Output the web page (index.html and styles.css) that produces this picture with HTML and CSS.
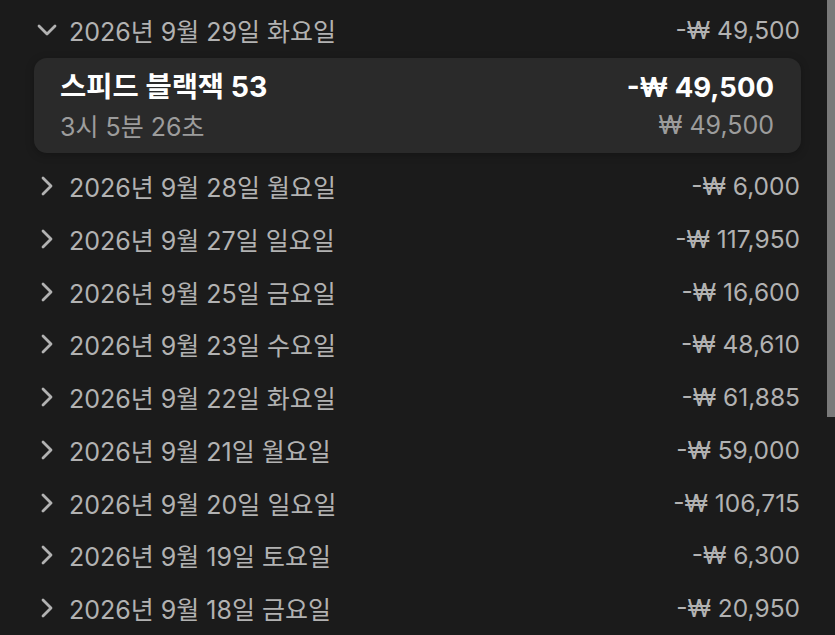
FILE: index.html
```html
<!DOCTYPE html>
<html lang="ko">
<head>
    <meta charset="UTF-8">
    <meta name="viewport" content="width=device-width, initial-scale=1.0">
    <title>결제 내역</title>
    <link rel="stylesheet" href="styles.css">
</head>
<body>
    <div class="list">
        <div class="day open">
            <svg class="chev" viewBox="0 0 20 20"><polyline points="2,6 10,14 18,6"/></svg>
            <span class="date">2026년 9월 29일 화요일</span>
            <span class="sum">-₩ 49,500</span>
        </div>
        <div class="card">
            <div class="card-row">
                <span class="title">스피드 블랙잭 53</span>
                <span class="amount">-₩ 49,500</span>
            </div>
            <div class="card-row sub">
                <span>3시 5분 26초</span>
                <span>₩ 49,500</span>
            </div>
        </div>
        <div class="day">
            <svg class="chev" viewBox="0 0 20 20"><polyline points="6,2 14,10 6,18"/></svg>
            <span class="date">2026년 9월 28일 월요일</span>
            <span class="sum">-₩ 6,000</span>
        </div>
        <div class="day">
            <svg class="chev" viewBox="0 0 20 20"><polyline points="6,2 14,10 6,18"/></svg>
            <span class="date">2026년 9월 27일 일요일</span>
            <span class="sum">-₩ 117,950</span>
        </div>
        <div class="day">
            <svg class="chev" viewBox="0 0 20 20"><polyline points="6,2 14,10 6,18"/></svg>
            <span class="date">2026년 9월 25일 금요일</span>
            <span class="sum">-₩ 16,600</span>
        </div>
        <div class="day">
            <svg class="chev" viewBox="0 0 20 20"><polyline points="6,2 14,10 6,18"/></svg>
            <span class="date">2026년 9월 23일 수요일</span>
            <span class="sum">-₩ 48,610</span>
        </div>
        <div class="day">
            <svg class="chev" viewBox="0 0 20 20"><polyline points="6,2 14,10 6,18"/></svg>
            <span class="date">2026년 9월 22일 화요일</span>
            <span class="sum">-₩ 61,885</span>
        </div>
        <div class="day">
            <svg class="chev" viewBox="0 0 20 20"><polyline points="6,2 14,10 6,18"/></svg>
            <span class="date">2026년 9월 21일 월요일</span>
            <span class="sum">-₩ 59,000</span>
        </div>
        <div class="day">
            <svg class="chev" viewBox="0 0 20 20"><polyline points="6,2 14,10 6,18"/></svg>
            <span class="date">2026년 9월 20일 일요일</span>
            <span class="sum">-₩ 106,715</span>
        </div>
        <div class="day">
            <svg class="chev" viewBox="0 0 20 20"><polyline points="6,2 14,10 6,18"/></svg>
            <span class="date">2026년 9월 19일 토요일</span>
            <span class="sum">-₩ 6,300</span>
        </div>
        <div class="day">
            <svg class="chev" viewBox="0 0 20 20"><polyline points="6,2 14,10 6,18"/></svg>
            <span class="date">2026년 9월 18일 금요일</span>
            <span class="sum">-₩ 20,950</span>
        </div>
    </div>
    <div class="scrollbar"><div class="thumb"></div></div>
</body>
</html>
```

FILE: styles.css
```css
body {
    margin: 0;
    background: #1b1b1b;
    font-family: 'Inter', 'Noto Sans CJK KR', sans-serif;
    height: 635px;
    overflow: hidden;
}
.list {
    padding: 4px 34px 0 34px;
    width: 767px;
}
.day {
    display: flex;
    align-items: center;
    height: 52.75px;
    color: #b2b2b2;
    font-size: 25px;
}
.chev {
    width: 20px;
    height: 20px;
    margin: 0 12px 0 3px;
    fill: none;
    stroke: #b2b2b2;
    stroke-width: 2.8;
    stroke-linecap: round;
    stroke-linejoin: round;
}
.date { flex: 1; }
.sum {
    margin-right: 1px;
    font-size: 24.5px;
}
.card {
    background: #2a2a2a;
    border-radius: 13px;
    padding: 11px 27px 10px 26px;
    margin: 1px 0 7px 0;
    box-shadow: 0 2px 8px rgba(0, 0, 0, 0.25);
}
.card-row {
    display: flex;
    justify-content: space-between;
    align-items: center;
}
.title, .amount {
    color: #fff;
    font-weight: bold;
    font-size: 27.5px;
    height: 36px;
    line-height: 36px;
}
.title { font-size: 28.5px; }
.sub {
    color: #9c9c9c;
    font-size: 25px;
    height: 36px;
    margin-top: 2px;
}
.scrollbar {
    position: fixed;
    top: 0;
    right: 0;
    width: 8px;
    height: 635px;
}
.thumb {
    height: 417px;
    background: #7a7a7a;
}
```
